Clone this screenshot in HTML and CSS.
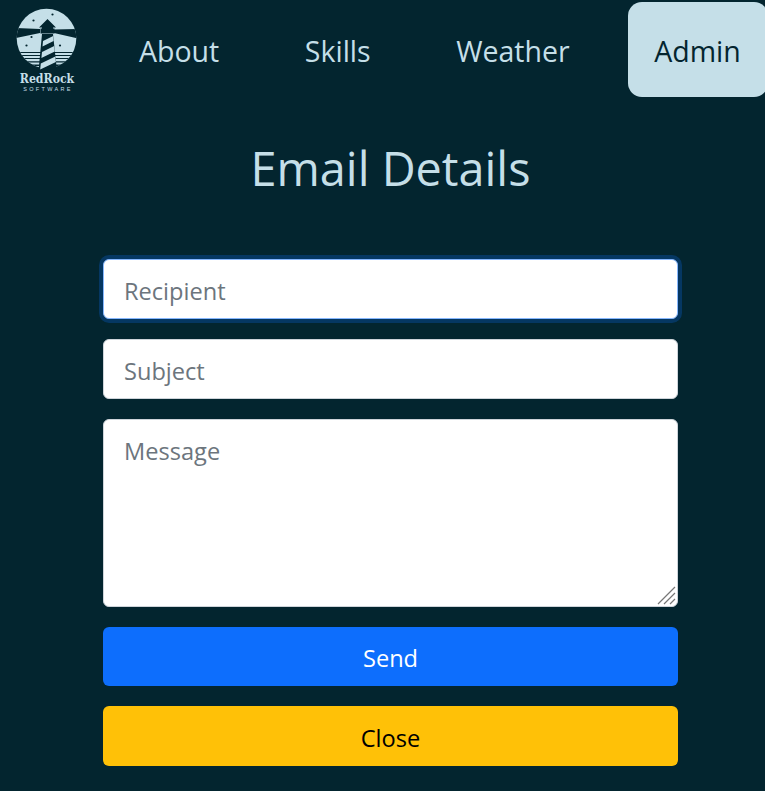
FILE: index.html
```html
<!DOCTYPE html>
<html lang="en">
<head>
  <meta charset="UTF-8">
  <title>Email Details</title>
  <link rel="stylesheet" href="styles.css">
</head>
<body>
  <nav class="navbar">
    <a class="logo" href="#">
      <svg width="62" height="65" viewBox="16 8 62 65">
        <clipPath id="disc"><circle cx="46.5" cy="38.5" r="29.8"/></clipPath>
        <g clip-path="url(#disc)">
          <rect x="16" y="8" width="62" height="65" fill="#c5dfe8"/>
          <path d="M40 29 L16 28 L16 38 L40 33 Z M54 29.5 L78 29 L78 38.5 L54 33 Z" fill="#03252f"/>
          <path d="M16 52h62v1H16zM16 55h62v1H16zM16 58h62v1.1H16zM16 61.2h62v1.2H16zM16 64.6h62v1.3H16zM16 68h62v6H16z" fill="#03252f"/>
        </g>
        <circle cx="33.5" cy="20.5" r="1.1" fill="#03252f"/>
        <circle cx="52.5" cy="14.5" r="1.1" fill="#03252f"/>
        <circle cx="31.5" cy="37" r="1.1" fill="#03252f"/>
        <circle cx="26.5" cy="45.5" r="1.1" fill="#03252f"/>
        <circle cx="60" cy="45.5" r="1.1" fill="#03252f"/>
        <path d="M47.5 19 L56 27.5 L53 27.5 L53 28.5 L54.5 28.5 L54.5 33.5 L40.5 33.5 L40.5 28.5 L42 28.5 L42 27.5 L39 27.5 Z M42 34h11l4 37h-18.500z" fill="#03252f"/>
        <path d="M43 41 L53.200 36 L53.600 41 L42.500 46.500 Z M42 52 L54.200 46 L54.800 51.500 L41.400 58 Z M40.800 63.500 L55.300 56.500 L55.900 62 L40.200 69.500 Z" fill="#c5dfe8"/>
      </svg>
      <span class="logo-name">RedRock</span>
      <span class="logo-sub">SOFTWARE</span>
    </a>
    <div class="nav-links">
      <a class="nav-link" href="#">About</a>
      <a class="nav-link" href="#">Skills</a>
      <a class="nav-link" href="#">Weather</a>
      <a class="nav-link active" href="#">Admin</a>
    </div>
  </nav>

  <div class="container">
    <h1>Email Details</h1>
    <form class="email-form">
      <input type="text" class="field focused" placeholder="Recipient">
      <input type="text" class="field" placeholder="Subject">
      <div class="message-wrap">
        <textarea class="field message" placeholder="Message"></textarea>
        <svg class="grip" width="20" height="20" viewBox="0 0 20 20">
          <path d="M1 18 L18 1 M7 18 L18 7 M13 18 L18 13" stroke="#777" stroke-width="1.2" fill="none"/>
        </svg>
      </div>
      <button type="button" class="btn send">Send</button>
      <button type="button" class="btn close">Close</button>
    </form>
  </div>
</body>
</html>
```
FILE: styles.css
```css
* { box-sizing: border-box; }
html, body { overflow: hidden; }
body { margin: 0; min-height: 791px; background: #03252f; font-family: "Open Sans", "Noto Sans", Arial, sans-serif; color: #c5dfe8; }

.navbar { display: flex; align-items: flex-start; height: 97px; padding-top: 2px; }
.logo { display: flex; flex-direction: column; align-items: center; width: 62px; margin: 6px 0 0 16px; color: #c5dfe8; text-decoration: none; }
.logo svg { display: block; flex: none; }
.logo-name { font-family: "DejaVu Serif", serif; font-stretch: condensed; font-weight: bold; font-size: 12.2px; line-height: 13px; margin-top: 0; white-space: nowrap; }
.logo-sub { font-family: "Liberation Sans", Arial, sans-serif; font-size: 5.5px; line-height: 7px; letter-spacing: 2.3px; margin-left: 2px; white-space: nowrap; }

.nav-links { display: flex; gap: 33.6px; margin-left: 35px; }
.nav-link { display: block; padding: 0 26px; line-height: 99px; height: 95px; font-size: 28.5px; color: #c5dfe8; text-decoration: none; border-radius: 14px; white-space: nowrap; }
.nav-link.active { margin-left: -1px; padding-right: 27px; background: #c5dfe8; color: #03252f; }

.container { width: 575px; margin-left: 103px; }
h1 { margin: 36px 0 0; height: 70px; line-height: 70px; text-align: center; font-size: 46.8px; font-weight: 400; }

.email-form { display: flex; flex-direction: column; gap: 20px; margin-top: 56px; }
.field { display: block; width: 100%; height: 60px; padding: 4px 20px 0; border: 1px solid #ced4da; border-radius: 6px; background: #fff; font-family: inherit; font-size: 23.6px; color: #212529; outline: none; }
.field::placeholder { color: #6c757d; opacity: 1; }
.field.focused { border-color: #86b7fe; box-shadow: 0 0 0 4px rgba(13, 110, 253, .25); }
.message-wrap { position: relative; }
.message { height: 188px; padding: 13px 20px; line-height: 36px; resize: none; }
.grip { position: absolute; right: 1px; bottom: 1px; }

.btn { display: block; width: 100%; height: 60px; padding-top: 4px; border: 1px solid transparent; border-radius: 6px; font-family: inherit; font-size: 23.6px; cursor: pointer; }
.send { height: 59px; background: #0d6efd; color: #fff; }
.close { background: #ffc107; color: #000; }
```
